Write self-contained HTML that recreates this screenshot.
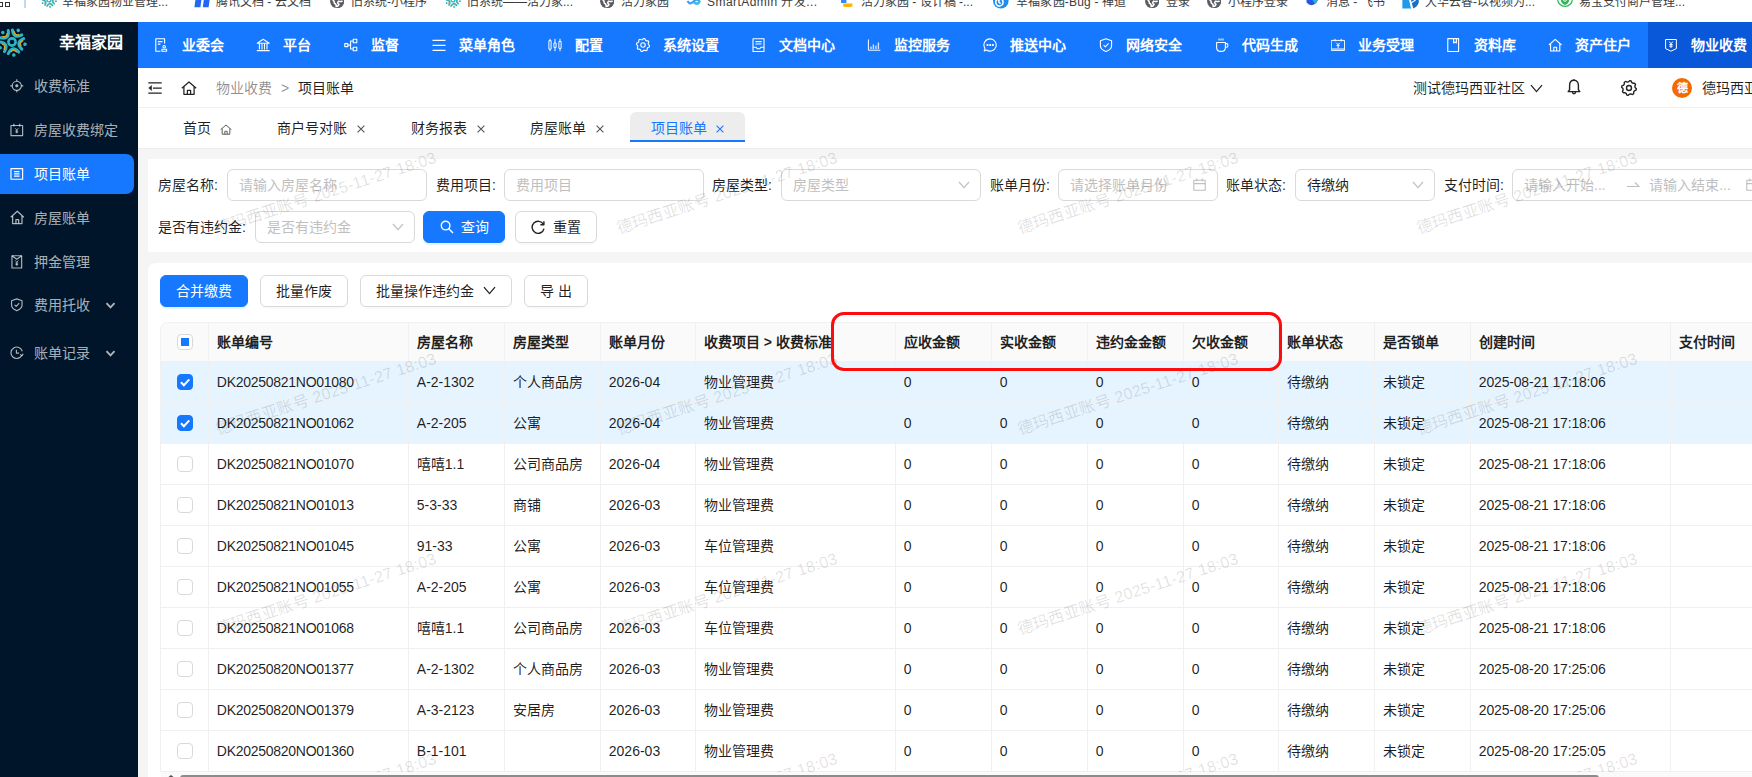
<!DOCTYPE html>
<html lang="zh-CN"><head><meta charset="utf-8"><title>项目账单</title>
<style>
*{box-sizing:border-box;margin:0;padding:0}
html,body{width:1752px;height:777px;overflow:hidden;background:#f5f5f5}
body{font-family:"Liberation Sans",sans-serif;font-size:14px;color:rgba(0,0,0,.88);position:relative;line-height:22px}
.abs{position:absolute}
svg{display:block}
#bm{left:0;top:0;width:1752px;height:22px;background:#fff;overflow:hidden}
#bm span{position:absolute;top:-6px;font-size:12px;line-height:16px;color:#3c3c3c;white-space:nowrap}
#bm i{position:absolute;top:-9px;width:15px;height:15px;border-radius:50%;display:block}
#hdr{left:138px;top:22px;width:1614px;height:46px;background:#1677ff;overflow:hidden}
#hdr .it{position:absolute;top:0;height:46px;color:#fff;font-weight:600;font-size:14px;line-height:46px;white-space:nowrap}
#hdr .ic{position:absolute;top:16px;width:14px;height:14px}
#hdr .act{position:absolute;left:1510px;top:0;width:110px;height:46px;background:#0958d9}
#side{left:0;top:22px;width:138px;height:755px;background:#001529;overflow:hidden}
#side .logo{position:absolute;left:-3px;top:4.8px;width:30px;height:30px}
#side .ttl{position:absolute;left:59px;top:9px;font-size:16px;font-weight:700;color:#fff;line-height:24px;white-space:nowrap}
#side .mi{position:absolute;left:0;width:134px;height:40px;color:rgba(255,255,255,.68);font-weight:500;line-height:40px;white-space:nowrap}
#side .mi.on{background:#1677ff;color:#fff;border-radius:0 8px 8px 0}
#side .mi svg{position:absolute;left:10.2px;top:13.2px;width:13.6px;height:13.6px}
#side .mi b{position:absolute;left:34px;top:0;font-weight:500}
#side .mi .arr{left:105px;top:15px;width:11px;height:11px}
#bc{left:138px;top:68px;width:1614px;height:40px;background:#fff;border-bottom:1px solid #f0f0f0}
#bc .t{position:absolute;top:9px;line-height:22px;white-space:nowrap}
#tabs{left:138px;top:108px;width:1614px;height:41px;background:#fff;border-bottom:1px solid #ececec}
#tabs .t{position:absolute;top:9px;line-height:22px;white-space:nowrap}
#tabs .on{position:absolute;left:492px;top:4px;width:115px;height:30px;background:#ededed;border-radius:6px 6px 0 0;border-bottom:2px solid #1677ff}
#tabs svg.x{position:absolute;top:16.5px;width:8px;height:8px}
#sc{left:148px;top:159px;width:1620px;height:93px;background:#fff;border-radius:0}
.lbl{position:absolute;line-height:32px;white-space:nowrap}
.inp{position:absolute;height:32px;border:1px solid #d9d9d9;border-radius:6px;background:#fff;line-height:30px;padding-left:11px;color:#bfbfbf;white-space:nowrap;overflow:hidden}
.inp.v{color:rgba(0,0,0,.88)}
.inp svg{position:absolute}
.btn{position:absolute;height:32px;border:1px solid #d9d9d9;border-radius:6px;background:#fff;line-height:30px;white-space:nowrap;box-shadow:0 2px 0 rgba(0,0,0,.02)}
.btn.p{background:#1677ff;border-color:#1677ff;color:#fff;box-shadow:0 2px 0 rgba(5,145,255,.1)}
.btn span{position:absolute;top:0}
.btn svg{position:absolute}
#tc{left:148px;top:263px;width:1620px;height:530px;background:#fff;border-radius:8px 0 0 0}
#tb{left:160px;top:322px;width:1600px;height:450px;border-left:1px solid #f0f0f0;border-top:1px solid #f0f0f0;border-radius:8px 0 0 0;overflow:hidden}
#tb .hd{position:absolute;left:0;top:0;width:1600px;height:39px;background:#fafafa;border-bottom:1px solid #f0f0f0}
#tb .r{position:absolute;left:0;width:1600px;height:41px;border-bottom:1px solid #f0f0f0}
#tb .r.s{background:#e6f4ff}
#tb .vl{position:absolute;top:0;width:1px;height:450px;background:#f0f0f0}
#tb .c{position:absolute;top:0;line-height:40px;white-space:nowrap}
#tb .hd .c{font-weight:700;line-height:38px}
.cb{position:absolute;left:16px;width:16px;height:16px;border:1px solid #d9d9d9;border-radius:4px;background:#fff}
.cb.k{background:#1677ff;border-color:#1677ff}
.cb.k svg{position:absolute;left:2px;top:2px;width:10px;height:10px}
.cb.h:after{content:"";position:absolute;left:3px;top:3px;width:8px;height:8px;background:#1677ff}
.wm{position:absolute;color:rgba(0,0,0,.13);font-size:16px;line-height:20px;letter-spacing:.25px;white-space:nowrap;transform:rotate(-18deg);transform-origin:0 50%;pointer-events:none}
#red{left:831px;top:312px;width:451px;height:59px;border:3px solid #fb0d0d;border-radius:13px}
#sb{left:161px;top:772px;width:1600px;height:5px;background:#fafafa}
#sb i{position:absolute;left:19px;top:3px;width:1419px;height:6px;border-radius:3px;background:#8b8b8b}
</style></head><body>
<div id="bm" class="abs"><b style="position:absolute;left:-1px;top:2px;width:4px;height:5px;border:1.5px solid #333"></b><b style="position:absolute;left:5px;top:2px;width:5px;height:5px;border:1.5px solid #333"></b><b style="position:absolute;left:24px;top:0;width:1.5px;height:8px;background:#c9d6f0"></b><svg class="abs" style="left:40.5px;top:-8px;width:16px;height:16px" viewBox="0 0 30 30"><circle cx="15" cy="15" r="3.6" fill="none" stroke="#2fb4c4" stroke-width="2.6"/><g transform="translate(15 15) rotate(-152)" fill="none" stroke-linecap="round"><path d="M-5.3 10.9 Q0 3.0 5.3 10.9" stroke="#2fb4c4" stroke-width="3"/><path d="M-2.2 9.5 Q0 6.9 3 10.2" stroke="#e4a51b" stroke-width="1.4"/><circle cx="0" cy="13.2" r="1.75" fill="#2fb4c4" stroke="none"/></g><g transform="translate(15 15) rotate(-80)" fill="none" stroke-linecap="round"><path d="M-5.3 10.9 Q0 3.0 5.3 10.9" stroke="#2fb4c4" stroke-width="3"/><path d="M-2.2 9.5 Q0 6.9 3 10.2" stroke="#e4a51b" stroke-width="1.4"/><circle cx="0" cy="13.2" r="1.75" fill="#2fb4c4" stroke="none"/></g><g transform="translate(15 15) rotate(-8)" fill="none" stroke-linecap="round"><path d="M-5.3 10.9 Q0 3.0 5.3 10.9" stroke="#2fb4c4" stroke-width="3"/><path d="M-2.2 9.5 Q0 6.9 3 10.2" stroke="#e4a51b" stroke-width="1.4"/><circle cx="0" cy="13.2" r="1.75" fill="#2fb4c4" stroke="none"/></g><g transform="translate(15 15) rotate(64)" fill="none" stroke-linecap="round"><path d="M-5.3 10.9 Q0 3.0 5.3 10.9" stroke="#2fb4c4" stroke-width="3"/><path d="M-2.2 9.5 Q0 6.9 3 10.2" stroke="#e4a51b" stroke-width="1.4"/><circle cx="0" cy="13.2" r="1.75" fill="#2fb4c4" stroke="none"/></g><g transform="translate(15 15) rotate(136)" fill="none" stroke-linecap="round"><path d="M-5.3 10.9 Q0 3.0 5.3 10.9" stroke="#2fb4c4" stroke-width="3"/><path d="M-2.2 9.5 Q0 6.9 3 10.2" stroke="#e4a51b" stroke-width="1.4"/><circle cx="0" cy="13.2" r="1.75" fill="#2fb4c4" stroke="none"/></g></svg><span style="left:62px">幸福家园物业管理...</span><svg class="abs" style="left:194px;top:0px;width:16px;height:8px" viewBox="0 0 16 8"><path d="M1.4 0 H7.4 L6.4 7.2 H.4 Z M9.8 0 H15.6 L14.6 7.2 H8.8 Z" fill="#2468f2"/></svg><span style="left:216px">腾讯文档 - 云文档</span><svg class="abs" style="left:330px;top:-6.4px;width:14.4px;height:14.4px" viewBox="0 0 14.4 14.4"><circle cx="7.2" cy="7.2" r="7.1" fill="#5a5d62"/><path d="M2.2 5.2 Q4.5 6.8 4.4 9.2 Q6.4 9.6 6.2 12.6 Q8.2 12.4 9 10.4 Q6.6 8.6 8.8 7.2 Q10.8 8.2 12.6 6.8" fill="none" stroke="#fff" stroke-width="1.5"/></svg><span style="left:351px">旧系统-小程序</span><svg class="abs" style="left:445px;top:-8px;width:16px;height:16px" viewBox="0 0 30 30"><circle cx="15" cy="15" r="3.6" fill="none" stroke="#2fb4c4" stroke-width="2.6"/><g transform="translate(15 15) rotate(-152)" fill="none" stroke-linecap="round"><path d="M-5.3 10.9 Q0 3.0 5.3 10.9" stroke="#2fb4c4" stroke-width="3"/><path d="M-2.2 9.5 Q0 6.9 3 10.2" stroke="#e4a51b" stroke-width="1.4"/><circle cx="0" cy="13.2" r="1.75" fill="#2fb4c4" stroke="none"/></g><g transform="translate(15 15) rotate(-80)" fill="none" stroke-linecap="round"><path d="M-5.3 10.9 Q0 3.0 5.3 10.9" stroke="#2fb4c4" stroke-width="3"/><path d="M-2.2 9.5 Q0 6.9 3 10.2" stroke="#e4a51b" stroke-width="1.4"/><circle cx="0" cy="13.2" r="1.75" fill="#2fb4c4" stroke="none"/></g><g transform="translate(15 15) rotate(-8)" fill="none" stroke-linecap="round"><path d="M-5.3 10.9 Q0 3.0 5.3 10.9" stroke="#2fb4c4" stroke-width="3"/><path d="M-2.2 9.5 Q0 6.9 3 10.2" stroke="#e4a51b" stroke-width="1.4"/><circle cx="0" cy="13.2" r="1.75" fill="#2fb4c4" stroke="none"/></g><g transform="translate(15 15) rotate(64)" fill="none" stroke-linecap="round"><path d="M-5.3 10.9 Q0 3.0 5.3 10.9" stroke="#2fb4c4" stroke-width="3"/><path d="M-2.2 9.5 Q0 6.9 3 10.2" stroke="#e4a51b" stroke-width="1.4"/><circle cx="0" cy="13.2" r="1.75" fill="#2fb4c4" stroke="none"/></g><g transform="translate(15 15) rotate(136)" fill="none" stroke-linecap="round"><path d="M-5.3 10.9 Q0 3.0 5.3 10.9" stroke="#2fb4c4" stroke-width="3"/><path d="M-2.2 9.5 Q0 6.9 3 10.2" stroke="#e4a51b" stroke-width="1.4"/><circle cx="0" cy="13.2" r="1.75" fill="#2fb4c4" stroke="none"/></g></svg><span style="left:467px">旧系统——活力家...</span><svg class="abs" style="left:600px;top:-6.4px;width:14.4px;height:14.4px" viewBox="0 0 14.4 14.4"><circle cx="7.2" cy="7.2" r="7.1" fill="#5a5d62"/><path d="M2.2 5.2 Q4.5 6.8 4.4 9.2 Q6.4 9.6 6.2 12.6 Q8.2 12.4 9 10.4 Q6.6 8.6 8.8 7.2 Q10.8 8.2 12.6 6.8" fill="none" stroke="#fff" stroke-width="1.5"/></svg><span style="left:621px">活力家园</span><svg class="abs" style="left:686px;top:-3px;width:15px;height:9px" viewBox="0 0 15 9"><path d="M1.5 4 Q4 8.4 7.5 4.6 Q11 .8 13.5 4.6 Q11 8.6 7.6 5" fill="none" stroke="#3aa0ff" stroke-width="2.2"/><path d="M8 5 Q11 8.6 13.5 4.6" fill="none" stroke="#35c3d6" stroke-width="2.2"/></svg><span style="left:707px;letter-spacing:.45px">SmartAdmin 开发...</span><svg class="abs" style="left:841px;top:0px;width:12px;height:8px" viewBox="0 0 12 8"><path d="M0 0 H5.4 V3 H0 Z" fill="#2f8bff"/><path d="M2.2 3.4 H11.4 V6.6 Q6 7.6 2.2 6.6 Z" fill="#ffb400"/></svg><span style="left:861px">活力家园 - 设计稿 -...</span><svg class="abs" style="left:993px;top:-7px;width:15.6px;height:15.6px" viewBox="0 0 15.6 15.6"><circle cx="7.8" cy="7.8" r="7.8" fill="#1e8df0"/><path d="M7.8 10.2 A2 2 0 1 1 9.8 8.2 A3.6 3.6 0 1 1 4.4 6.4" fill="none" stroke="#fff" stroke-width="1.5"/></svg><span style="left:1016px;letter-spacing:.2px">幸福家园-Bug - 禅道</span><svg class="abs" style="left:1145px;top:-6.4px;width:14.4px;height:14.4px" viewBox="0 0 14.4 14.4"><circle cx="7.2" cy="7.2" r="7.1" fill="#5a5d62"/><path d="M2.2 5.2 Q4.5 6.8 4.4 9.2 Q6.4 9.6 6.2 12.6 Q8.2 12.4 9 10.4 Q6.6 8.6 8.8 7.2 Q10.8 8.2 12.6 6.8" fill="none" stroke="#fff" stroke-width="1.5"/></svg><span style="left:1166px">登录</span><svg class="abs" style="left:1207px;top:-6.4px;width:14.4px;height:14.4px" viewBox="0 0 14.4 14.4"><circle cx="7.2" cy="7.2" r="7.1" fill="#5a5d62"/><path d="M2.2 5.2 Q4.5 6.8 4.4 9.2 Q6.4 9.6 6.2 12.6 Q8.2 12.4 9 10.4 Q6.6 8.6 8.8 7.2 Q10.8 8.2 12.6 6.8" fill="none" stroke="#fff" stroke-width="1.5"/></svg><span style="left:1228px">小程序登录</span><svg class="abs" style="left:1306px;top:0px;width:13px;height:6px" viewBox="0 0 13 6"><path d="M.4 0 H11.8 Q11 3 8 4.6 Q3.6 6.4 .6 2.6 Z" fill="#2a55e6"/><path d="M6.5 0 H11.8 Q11 2.4 8.6 3.6 Z" fill="#22b8c8"/></svg><span style="left:1326px">消息 - 飞书</span><svg class="abs" style="left:1402px;top:0px;width:18px;height:9px" viewBox="0 0 18 9"><path d="M.4 0 H7.6 L9.6 8.6 H.4 Z" fill="#1f9be8"/><path d="M9 0 H16.8 Q17.4 5.6 11.2 8.6 Z" fill="#1670c8"/><path d="M7.6 0 L9.6 8.6 M9 3 L13.6 0" stroke="#fff" stroke-width="1.1" fill="none"/></svg><span style="left:1425px">大华云睿-以视频为...</span><svg class="abs" style="left:1557px;top:-8.6px;width:16px;height:16px" viewBox="0 0 16 16"><circle cx="8" cy="8" r="7.4" fill="none" stroke="#2fb457" stroke-width="1.2"/><path d="M3.6 8 Q8 10 12.4 8 Q12 12.6 8 14 Q4 12.6 3.6 8 Z" fill="#2fb457"/><path d="M6.2 9.4 Q8 11.4 9.8 9.4" stroke="#fff" stroke-width="1" fill="none"/></svg><span style="left:1579px">易宝支付商户管理...</span></div>
<div id="side" class="abs"><svg class="logo" viewBox="0 0 30 30"><circle cx="15" cy="15" r="3.6" fill="none" stroke="#2fb4c4" stroke-width="2.6"/><g transform="translate(15 15) rotate(-152)" fill="none" stroke-linecap="round"><path d="M-5.3 10.9 Q0 3.0 5.3 10.9" stroke="#2fb4c4" stroke-width="3"/><path d="M-2.2 9.5 Q0 6.9 3 10.2" stroke="#e4a51b" stroke-width="1.4"/><circle cx="0" cy="13.2" r="1.75" fill="#2fb4c4" stroke="none"/></g><g transform="translate(15 15) rotate(-80)" fill="none" stroke-linecap="round"><path d="M-5.3 10.9 Q0 3.0 5.3 10.9" stroke="#2fb4c4" stroke-width="3"/><path d="M-2.2 9.5 Q0 6.9 3 10.2" stroke="#e4a51b" stroke-width="1.4"/><circle cx="0" cy="13.2" r="1.75" fill="#2fb4c4" stroke="none"/></g><g transform="translate(15 15) rotate(-8)" fill="none" stroke-linecap="round"><path d="M-5.3 10.9 Q0 3.0 5.3 10.9" stroke="#2fb4c4" stroke-width="3"/><path d="M-2.2 9.5 Q0 6.9 3 10.2" stroke="#e4a51b" stroke-width="1.4"/><circle cx="0" cy="13.2" r="1.75" fill="#2fb4c4" stroke="none"/></g><g transform="translate(15 15) rotate(64)" fill="none" stroke-linecap="round"><path d="M-5.3 10.9 Q0 3.0 5.3 10.9" stroke="#2fb4c4" stroke-width="3"/><path d="M-2.2 9.5 Q0 6.9 3 10.2" stroke="#e4a51b" stroke-width="1.4"/><circle cx="0" cy="13.2" r="1.75" fill="#2fb4c4" stroke="none"/></g><g transform="translate(15 15) rotate(136)" fill="none" stroke-linecap="round"><path d="M-5.3 10.9 Q0 3.0 5.3 10.9" stroke="#2fb4c4" stroke-width="3"/><path d="M-2.2 9.5 Q0 6.9 3 10.2" stroke="#e4a51b" stroke-width="1.4"/><circle cx="0" cy="13.2" r="1.75" fill="#2fb4c4" stroke="none"/></g></svg><div class="ttl">幸福家园</div><div class="mi" style="top:44px"><svg viewBox="0 0 14 14"><g fill="none" stroke="currentColor" stroke-width="1.2" stroke-linejoin="round"><circle cx="7" cy="7" r="4.7"/><circle cx="7" cy="7" r="1.3" fill="currentColor" stroke-width=".6"/><path d="M7 .3 V2.3 M7 11.7 V13.7 M.3 7 H2.3 M11.7 7 H13.7"/></g></svg><b>收费标准</b></div><div class="mi" style="top:88px"><svg viewBox="0 0 14 14"><g fill="none" stroke="currentColor" stroke-width="1.2" stroke-linejoin="round"><rect x="1" y="2.6" width="12" height="10.4"/><path d="M4 .8 V3.6 M10 .8 V3.6"/><path d="M5.4 5.4 L7 7.3 L8.6 5.4 M7 7.3 V10.6 M5.6 8.2 H8.4 M5.6 9.4 H8.4" stroke-width=".9"/></g></svg><b>房屋收费绑定</b></div><div class="mi on" style="top:132px"><svg viewBox="0 0 14 14"><g fill="none" stroke="currentColor" stroke-width="1.2" stroke-linejoin="round"><rect x="1" y="1.6" width="12" height="11"/><path d="M4.2 4.8 H9.8 M4.2 7.1 H9.8 M4.2 9.4 H9.8"/></g></svg><b>项目账单</b></div><div class="mi" style="top:176px"><svg viewBox="0 0 14 14" style="left:9.6px;top:12.4px;width:14.6px;height:14.6px"><g fill="none" stroke="currentColor" stroke-width="1.2" stroke-linejoin="round"><path d="M.7 7 L7 1.2 L13.3 7"/><path d="M2.5 5.8 V13 H11.5 V5.8"/><path d="M5.7 13 V9.3 H8.3 V13"/></g></svg><b>房屋账单</b></div><div class="mi" style="top:220px"><svg viewBox="0 0 14 14"><g fill="none" stroke="currentColor" stroke-width="1.2" stroke-linejoin="round"><rect x="2" y=".8" width="10" height="12.6"/><path d="M2 .8 L7 4.4 L12 .8" /><path d="M5.4 5.6 L7 7.5 L8.6 5.6 M7 7.5 V11.2 M5.6 8.4 H8.4 M5.6 9.8 H8.4" stroke-width=".9"/></g></svg><b>押金管理</b></div><div class="mi" style="top:263px"><svg viewBox="0 0 14 14"><g fill="none" stroke="currentColor" stroke-width="1.2" stroke-linejoin="round"><path d="M7 .9 L12.4 2.9 V7.3 C12.4 10.2 9.7 12.1 7 13.2 C4.3 12.1 1.6 10.2 1.6 7.3 V2.9 Z"/><path d="M4.7 7 L6.4 8.7 L9.5 5.3"/></g></svg><b>费用托收</b><svg class="arr" viewBox="0 0 11 11" style="left:105px;top:15px;width:11px;height:11px"><path d="M1.5 3.2 L5.5 7.4 L9.5 3.2" fill="none" stroke="currentColor" stroke-width="1.9"/></svg></div><div class="mi" style="top:311px"><svg viewBox="0 0 14 14"><g fill="none" stroke="currentColor" stroke-width="1.2" stroke-linejoin="round"><path d="M12.2 9.6 A5.9 5.9 0 1 1 12.6 5.4"/><path d="M10.6 8.6 L12.4 10 L13.6 8"/><path d="M6.6 3.8 V7.4 H9.4"/></g></svg><b>账单记录</b><svg class="arr" viewBox="0 0 11 11" style="left:105px;top:15px;width:11px;height:11px"><path d="M1.5 3.2 L5.5 7.4 L9.5 3.2" fill="none" stroke="currentColor" stroke-width="1.9"/></svg></div></div>
<div id="hdr" class="abs"><div class="act"></div><svg class="ic" style="left:16.7px" viewBox="0 0 14 14"><g fill="none" stroke="#fff" stroke-width="1.1" stroke-linejoin="round"><path d="M5.4 13.3 H.8 V.7 H9.6 V5.6"/><path d="M2.8 3.6 H7.6 M2.8 6.1 H5.4"/><circle cx="9.2" cy="8.7" r="1.25"/><path d="M6.9 13.3 V11.2 H11.6 V13.3 Z"/></g></svg><div class="it" style="left:43.6px">业委会</div><svg class="ic" style="left:118.2px" viewBox="0 0 14 14"><g fill="none" stroke="#fff" stroke-width="1.1" stroke-linejoin="round"><path d="M1.2 5.2 L7.2 1.3 L13.2 5.2 Z"/><path d="M3.4 5.6 V11.4 M6 5.6 V11.4 M8.5 5.6 V11.4 M11 5.6 V11.4 M.8 12.6 H13.6"/></g></svg><div class="it" style="left:145.1px">平台</div><svg class="ic" style="left:206.2px" viewBox="0 0 14 14"><g fill="none" stroke="#fff" stroke-width="1.1" stroke-linejoin="round"><rect x=".8" y="5.6" width="3" height="3"/><rect x="9.2" y="1.3" width="3.6" height="3.4"/><rect x="9.2" y="9.3" width="3.6" height="3.4"/><path d="M3.8 7.1 H6.6 M9.2 3 H6.6 V11 H9.2"/></g></svg><div class="it" style="left:233.1px">监督</div><svg class="ic" style="left:293.9px" viewBox="0 0 14 14"><g fill="none" stroke="#fff" stroke-width="1.3" stroke-linejoin="round"><path d="M.5 2.4 H13.5 M.5 7.3 H13.5 M.5 12.4 H13.5"/></g></svg><div class="it" style="left:320.8px">菜单角色</div><svg class="ic" style="left:409.9px" viewBox="0 0 14 14"><g fill="none" stroke="#fff" stroke-width="1" stroke-linejoin="round"><path d="M2 .8 V13.2 M7 .8 V13.2 M12 .8 V13.2"/><rect x=".9" y="2.6" width="2.2" height="8.6" fill="#1677ff"/><rect x="5.9" y="5" width="2.2" height="4.4" fill="#1677ff"/><rect x="10.9" y="3.4" width="2.2" height="7" fill="#1677ff"/></g></svg><div class="it" style="left:436.8px">配置</div><svg class="ic" style="left:497.9px" viewBox="0 0 14 14"><g fill="none" stroke="#fff" stroke-width="1.1" stroke-linejoin="round"><path d="M7.65 0.43 L8.92 0.68 L9.55 2.24 L10.43 2.83 L12.10 2.81 L12.82 3.89 L12.17 5.43 L12.37 6.47 L13.57 7.65 L13.32 8.92 L11.76 9.55 L11.17 10.43 L11.19 12.10 L10.11 12.82 L8.57 12.17 L7.53 12.37 L6.35 13.57 L5.08 13.32 L4.45 11.76 L3.57 11.17 L1.90 11.19 L1.18 10.11 L1.83 8.57 L1.63 7.53 L0.43 6.35 L0.68 5.08 L2.24 4.45 L2.83 3.57 L2.81 1.90 L3.89 1.18 L5.43 1.83 L6.47 1.63 Z"/><circle cx="7" cy="7" r="2.2"/></g></svg><div class="it" style="left:524.8px">系统设置</div><svg class="ic" style="left:613.9px" viewBox="0 0 14 14"><g fill="none" stroke="#fff" stroke-width="1.1" stroke-linejoin="round"><rect x="1" y=".7" width="11" height="12.8"/><path d="M3.4 3.6 H9.6 M3.4 6 H9.6 M1 9.2 H4.2 L5.2 10.8 H7.8 L8.8 9.2 H12"/></g></svg><div class="it" style="left:640.8px">文档中心</div><svg class="ic" style="left:729.2px" viewBox="0 0 14 14"><g fill="none" stroke="#fff" stroke-width="1" stroke-linejoin="round"><path d="M1.4 1.5 V12.2 H13.4"/><path d="M4 8.4 V11 M6.4 6.6 V11 M8.9 7.6 V11 M11.4 4.4 V11" stroke-width="1.4" opacity=".8"/></g></svg><div class="it" style="left:756.1px">监控服务</div><svg class="ic" style="left:845.2px" viewBox="0 0 14 14"><g fill="none" stroke="#fff" stroke-width="1.1" stroke-linejoin="round"><path d="M7.2 .9 A6.1 6.1 0 1 1 3.6 12 L1.2 12.9 L2 10.4 A6.1 6.1 0 0 1 7.2 .9 Z"/><circle cx="4.5" cy="7" r=".55" fill="#fff"/><circle cx="7.2" cy="7" r=".55" fill="#fff"/><circle cx="9.9" cy="7" r=".55" fill="#fff"/></g></svg><div class="it" style="left:872.1px">推送中心</div><svg class="ic" style="left:961.2px" viewBox="0 0 14 14"><g fill="none" stroke="#fff" stroke-width="1.1" stroke-linejoin="round"><path d="M7 .7 L12.6 2.7 V7.4 C12.6 10.4 9.8 12.4 7 13.5 C4.2 12.4 1.4 10.4 1.4 7.4 V2.7 Z"/><path d="M4.6 7.2 L6.3 8.9 L9.6 5.3"/></g></svg><div class="it" style="left:988.1px">网络安全</div><svg class="ic" style="left:1077.2px" viewBox="0 0 14 14"><g fill="none" stroke="#fff" stroke-width="1.1" stroke-linejoin="round"><path d="M4 .4 V2.6 M6 .4 V2.6 M8 .4 V2.6"/><path d="M1.6 4.5 H10.4 V9.4 C10.4 11.9 8.4 13.4 6 13.4 C3.6 13.4 1.6 11.9 1.6 9.4 Z"/><path d="M10.4 5.6 H11.6 C13.4 5.6 13.4 9.2 11.6 9.2 H10.4"/></g></svg><div class="it" style="left:1104.1px">代码生成</div><svg class="ic" style="left:1192.9px" viewBox="0 0 14 14"><g fill="none" stroke="#fff" stroke-width="1" stroke-linejoin="round"><rect x=".2" y="2.4" width="13.4" height="10"/><path d="M4 .8 V3.4 M10.2 .8 V3.4 M.7 11 H13.5"/><path d="M5.4 4.8 L7.1 6.8 L8.8 4.8 M7.1 6.8 V10 M5.6 7.4 H8.6"/></g></svg><div class="it" style="left:1219.8px">业务受理</div><svg class="ic" style="left:1308.9px" viewBox="0 0 14 14"><g fill="none" stroke="#fff" stroke-width="1.1" stroke-linejoin="round"><rect x=".8" y=".6" width="10.8" height="13"/><path d="M6.6 .6 V5 L8 4 L9.4 5 V.6"/></g></svg><div class="it" style="left:1335.8px">资料库</div><svg class="ic" style="left:1410.4px" viewBox="0 0 14 14"><g fill="none" stroke="#fff" stroke-width="1.1" stroke-linejoin="round"><path d="M.9 7 L7.2 1.3 L13.5 7"/><path d="M2.6 5.8 V13 H11.8 V5.8"/><path d="M5.8 13 V9.2 H8.6 V13"/></g></svg><div class="it" style="left:1437.3px">资产住户</div><svg class="ic" style="left:1526.2px" viewBox="0 0 14 14"><g fill="none" stroke="#fff" stroke-width="1" stroke-linejoin="round"><path d="M1.6 1.5 H12.4 V10.6 L7 13.2 L1.6 10.6 Z"/><path d="M5.2 3.6 L7 5.8 L8.8 3.6 M7 5.8 V10 M5.3 6.6 H8.7 M5.3 8.2 H8.7"/></g></svg><div class="it" style="left:1553.1px">物业收费</div></div>
<div id="bc" class="abs"><svg class="abs" style="left:10px;top:14px;width:14px;height:12px" viewBox="0 0 14 12"><g fill="none" stroke="#222" stroke-width="1.25" stroke-linejoin="round"><path d="M.3 .8 H13.7 M5 6 H13.7 M.3 11.2 H13.7"/><path d="M3.6 3.4 V8.6 L.6 6 Z" fill="#222" stroke-width=".4"/></g></svg><svg class="abs" style="left:43px;top:13px;width:16px;height:14px" viewBox="0 0 16 14"><g fill="none" stroke="#222" stroke-width="1.25" stroke-linejoin="round"><path d="M.8 7.2 L8 1 L15.2 7.2"/><path d="M2.9 5.8 V13.3 H13.1 V5.8"/><path d="M6.4 13.3 V9.4 H9.6 V13.3"/></g></svg><div class="t" style="left:78px;color:rgba(0,0,0,.45)">物业收费</div><div class="t" style="left:143px;color:rgba(0,0,0,.45)">&gt;</div><div class="t" style="left:160px">项目账单</div><div class="t" style="left:1275px">测试德玛西亚社区</div><svg class="abs" style="left:1392px;top:16px;width:13px;height:9px" viewBox="0 0 13 9"><path d="M1 1.2 L6.5 7.6 L12 1.2" fill="none" stroke="#222" stroke-width="1.3"/></svg><svg class="abs" style="left:1429px;top:11px;width:14px;height:17px" viewBox="0 0 14 17"><g fill="none" stroke="#222" stroke-width="1.4" stroke-linejoin="round"><path d="M7 1.2 C3.8 1.2 2.6 3.8 2.6 6.2 V10.8 L1.2 12.6 H12.8 L11.4 10.8 V6.2 C11.4 3.8 10.2 1.2 7 1.2 Z"/><path d="M5.4 13 C5.6 15.4 8.4 15.4 8.6 13" /><path d="M7 .2 V1.2"/></g></svg><svg class="abs" style="left:1483px;top:12px;width:16px;height:16px" viewBox="0 0 16 16"><g fill="none" stroke="#222" stroke-width="1.4" stroke-linejoin="round"><path d="M8.73 0.64 L10.15 0.92 L10.88 2.62 L11.87 3.28 L13.72 3.31 L14.53 4.51 L13.84 6.23 L14.07 7.40 L15.36 8.73 L15.08 10.15 L13.38 10.88 L12.72 11.87 L12.69 13.72 L11.49 14.53 L9.77 13.84 L8.60 14.07 L7.27 15.36 L5.85 15.08 L5.12 13.38 L4.13 12.72 L2.28 12.69 L1.47 11.49 L2.16 9.77 L1.93 8.60 L0.64 7.27 L0.92 5.85 L2.62 5.12 L3.28 4.13 L3.31 2.28 L4.51 1.47 L6.23 2.16 L7.40 1.93 Z"/><circle cx="8" cy="8" r="2.5"/></g></svg><div class="abs" style="left:1534px;top:10px;width:20px;height:20px;border-radius:50%;background:#f56a00;color:#fff;font-size:11px;font-weight:600;line-height:20px;text-align:center">德</div><div class="t" style="left:1564px">德玛西亚</div></div>
<div id="tabs" class="abs"><div class="on"></div><div class="t" style="left:45px">首页</div><svg class="abs" style="left:82px;top:16px;width:12px;height:11px" viewBox="0 0 16 14"><g fill="none" stroke="#555" stroke-width="1.25" stroke-linejoin="round"><path d="M.8 7.2 L8 1 L15.2 7.2"/><path d="M2.9 5.8 V13.3 H13.1 V5.8"/><path d="M6.4 13.3 V9.4 H9.6 V13.3"/></g></svg><div class="t" style="left:139px;color:rgba(0,0,0,.88)">商户号对账</div><svg class="x" style="left:219px" viewBox="0 0 8 8"><path d="M.6 .6 L7.4 7.4 M7.4 .6 L.6 7.4" stroke="#555" stroke-width="1.1" fill="none"/></svg><div class="t" style="left:273px;color:rgba(0,0,0,.88)">财务报表</div><svg class="x" style="left:339px" viewBox="0 0 8 8"><path d="M.6 .6 L7.4 7.4 M7.4 .6 L.6 7.4" stroke="#555" stroke-width="1.1" fill="none"/></svg><div class="t" style="left:392px;color:rgba(0,0,0,.88)">房屋账单</div><svg class="x" style="left:458px" viewBox="0 0 8 8"><path d="M.6 .6 L7.4 7.4 M7.4 .6 L.6 7.4" stroke="#555" stroke-width="1.1" fill="none"/></svg><div class="t" style="left:513px;color:#1677ff">项目账单</div><svg class="x" style="left:578px" viewBox="0 0 8 8"><path d="M.6 .6 L7.4 7.4 M7.4 .6 L.6 7.4" stroke="#1677ff" stroke-width="1.1" fill="none"/></svg></div>
<div id="sc" class="abs"><div class="lbl" style="left:10px;top:10px">房屋名称:</div><div class="inp" style="left:79px;top:10px;width:200px">请输入房屋名称</div><div class="lbl" style="left:288px;top:10px">费用项目:</div><div class="inp" style="left:356px;top:10px;width:200px">费用项目</div><div class="lbl" style="left:564px;top:10px">房屋类型:</div><div class="inp" style="left:633px;top:10px;width:200px">房屋类型<svg style="right:10px;top:11px;width:12px;height:8px" viewBox="0 0 12 8"><path d="M1 1 L6 6.6 L11 1" fill="none" stroke="#bfbfbf" stroke-width="1.2"/></svg></div><div class="lbl" style="left:842px;top:10px">账单月份:</div><div class="inp" style="left:910px;top:10px;width:160px">请选择账单月份<svg style="right:11px;top:8px;width:13px;height:13px" viewBox="0 0 13 13"><g fill="none" stroke="#bfbfbf" stroke-width="1.1" stroke-linejoin="round"><rect x=".8" y="2.2" width="11.4" height="10"/><path d="M3.8 .6 V3.4 M9.2 .6 V3.4 M.8 5.6 H12.2"/></g></svg></div><div class="lbl" style="left:1078px;top:10px">账单状态:</div><div class="inp v" style="left:1147px;top:10px;width:140px">待缴纳<svg style="right:10px;top:11px;width:12px;height:8px" viewBox="0 0 12 8"><path d="M1 1 L6 6.6 L11 1" fill="none" stroke="#bfbfbf" stroke-width="1.2"/></svg></div><div class="lbl" style="left:1296px;top:10px">支付时间:</div><div class="inp" style="left:1364px;top:10px;width:260px">请输入开始...<span style="position:absolute;left:136.2px;top:0">请输入结束...</span><svg style="left:114px;top:11px;width:13px;height:8px" viewBox="0 0 13 8"><path d="M0 5.5 H12 L8 1.5" fill="none" stroke="#bfbfbf" stroke-width="1.1"/></svg><svg style="left:233px;top:8px;width:13px;height:13px" viewBox="0 0 13 13"><g fill="none" stroke="#bfbfbf" stroke-width="1.1" stroke-linejoin="round"><rect x=".8" y="2.2" width="11.4" height="10"/><path d="M3.8 .6 V3.4 M9.2 .6 V3.4 M.8 5.6 H12.2"/></g></svg></div><div class="lbl" style="left:10px;top:52px">是否有违约金:</div><div class="inp" style="left:107px;top:52px;width:160px">是否有违约金<svg style="right:10px;top:11px;width:12px;height:8px" viewBox="0 0 12 8"><path d="M1 1 L6 6.6 L11 1" fill="none" stroke="#bfbfbf" stroke-width="1.2"/></svg></div><div class="btn p" style="left:275px;top:52px;width:82px"><svg style="left:16px;top:8px;width:14px;height:14px" viewBox="0 0 14 14"><g fill="none" stroke="#fff" stroke-width="1.4" stroke-linejoin="round"><circle cx="5.6" cy="5.6" r="4.3"/><path d="M8.8 8.8 L13 13"/></g></svg><span style="left:37px">查询</span></div><div class="btn" style="left:367px;top:52px;width:82px"><svg style="left:15px;top:8px;width:14px;height:14px" viewBox="0 0 14 14"><g fill="none" stroke="#222" stroke-width="1.4" stroke-linejoin="round"><path d="M12.4 4.4 A6 6 0 1 0 13 8.6"/><path d="M12.9 1.2 V4.8 H9.4" /></g></svg><span style="left:37.2px">重置</span></div></div>
<div id="tc" class="abs"><div class="btn p" style="left:12px;top:12px;width:88px"><span style="left:15px">合并缴费</span></div><div class="btn" style="left:112px;top:12px;width:88px"><span style="left:15px">批量作废</span></div><div class="btn" style="left:212px;top:12px;width:152px"><span style="left:15px">批量操作违约金</span><svg style="left:122px;top:10.3px;width:13px;height:9px" viewBox="0 0 13 9"><path d="M1 1.2 L6.5 7.6 L12 1.2" fill="none" stroke="#222" stroke-width="1.3"/></svg></div><div class="btn" style="left:376px;top:12px;width:64px"><span style="left:15px">导 出</span></div></div>
<div id="tb" class="abs"><div class="hd"><div class="cb h" style="top:11px"></div><div class="c" style="left:55.8px">账单编号</div><div class="c" style="left:255.8px">房屋名称</div><div class="c" style="left:351.8px">房屋类型</div><div class="c" style="left:447.8px">账单月份</div><div class="c" style="left:542.8px">收费项目 &gt; 收费标准</div><div class="c" style="left:742.8px">应收金额</div><div class="c" style="left:838.8px">实收金额</div><div class="c" style="left:934.8px">违约金金额</div><div class="c" style="left:1030.8px">欠收金额</div><div class="c" style="left:1125.8px">账单状态</div><div class="c" style="left:1221.8px">是否锁单</div><div class="c" style="left:1317.8px">创建时间</div><div class="c" style="left:1517.8px">支付时间</div></div><div class="r s" style="top:39px"><div class="cb k" style="top:12px"><svg viewBox="0 0 10 10"><path d="M.9 5.3 L3.9 8.3 L9.3 2.4" fill="none" stroke="#fff" stroke-width="2"/></svg></div><div class="c" style="left:55.8px;letter-spacing:-.27px">DK20250821NO01080</div><div class="c" style="left:255.8px">A-2-1302</div><div class="c" style="left:351.8px">个人商品房</div><div class="c" style="left:447.8px">2026-04</div><div class="c" style="left:542.8px">物业管理费</div><div class="c" style="left:742.8px">0</div><div class="c" style="left:838.8px">0</div><div class="c" style="left:934.8px">0</div><div class="c" style="left:1030.8px">0</div><div class="c" style="left:1125.8px">待缴纳</div><div class="c" style="left:1221.8px">未锁定</div><div class="c" style="left:1317.8px;letter-spacing:-.17px">2025-08-21 17:18:06</div></div><div class="r s" style="top:80px"><div class="cb k" style="top:12px"><svg viewBox="0 0 10 10"><path d="M.9 5.3 L3.9 8.3 L9.3 2.4" fill="none" stroke="#fff" stroke-width="2"/></svg></div><div class="c" style="left:55.8px;letter-spacing:-.27px">DK20250821NO01062</div><div class="c" style="left:255.8px">A-2-205</div><div class="c" style="left:351.8px">公寓</div><div class="c" style="left:447.8px">2026-04</div><div class="c" style="left:542.8px">物业管理费</div><div class="c" style="left:742.8px">0</div><div class="c" style="left:838.8px">0</div><div class="c" style="left:934.8px">0</div><div class="c" style="left:1030.8px">0</div><div class="c" style="left:1125.8px">待缴纳</div><div class="c" style="left:1221.8px">未锁定</div><div class="c" style="left:1317.8px;letter-spacing:-.17px">2025-08-21 17:18:06</div></div><div class="r" style="top:121px"><div class="cb" style="top:12px"></div><div class="c" style="left:55.8px;letter-spacing:-.27px">DK20250821NO01070</div><div class="c" style="left:255.8px">嘻嘻1.1</div><div class="c" style="left:351.8px">公司商品房</div><div class="c" style="left:447.8px">2026-04</div><div class="c" style="left:542.8px">物业管理费</div><div class="c" style="left:742.8px">0</div><div class="c" style="left:838.8px">0</div><div class="c" style="left:934.8px">0</div><div class="c" style="left:1030.8px">0</div><div class="c" style="left:1125.8px">待缴纳</div><div class="c" style="left:1221.8px">未锁定</div><div class="c" style="left:1317.8px;letter-spacing:-.17px">2025-08-21 17:18:06</div></div><div class="r" style="top:162px"><div class="cb" style="top:12px"></div><div class="c" style="left:55.8px;letter-spacing:-.27px">DK20250821NO01013</div><div class="c" style="left:255.8px">5-3-33</div><div class="c" style="left:351.8px">商铺</div><div class="c" style="left:447.8px">2026-03</div><div class="c" style="left:542.8px">物业管理费</div><div class="c" style="left:742.8px">0</div><div class="c" style="left:838.8px">0</div><div class="c" style="left:934.8px">0</div><div class="c" style="left:1030.8px">0</div><div class="c" style="left:1125.8px">待缴纳</div><div class="c" style="left:1221.8px">未锁定</div><div class="c" style="left:1317.8px;letter-spacing:-.17px">2025-08-21 17:18:06</div></div><div class="r" style="top:203px"><div class="cb" style="top:12px"></div><div class="c" style="left:55.8px;letter-spacing:-.27px">DK20250821NO01045</div><div class="c" style="left:255.8px">91-33</div><div class="c" style="left:351.8px">公寓</div><div class="c" style="left:447.8px">2026-03</div><div class="c" style="left:542.8px">车位管理费</div><div class="c" style="left:742.8px">0</div><div class="c" style="left:838.8px">0</div><div class="c" style="left:934.8px">0</div><div class="c" style="left:1030.8px">0</div><div class="c" style="left:1125.8px">待缴纳</div><div class="c" style="left:1221.8px">未锁定</div><div class="c" style="left:1317.8px;letter-spacing:-.17px">2025-08-21 17:18:06</div></div><div class="r" style="top:244px"><div class="cb" style="top:12px"></div><div class="c" style="left:55.8px;letter-spacing:-.27px">DK20250821NO01055</div><div class="c" style="left:255.8px">A-2-205</div><div class="c" style="left:351.8px">公寓</div><div class="c" style="left:447.8px">2026-03</div><div class="c" style="left:542.8px">车位管理费</div><div class="c" style="left:742.8px">0</div><div class="c" style="left:838.8px">0</div><div class="c" style="left:934.8px">0</div><div class="c" style="left:1030.8px">0</div><div class="c" style="left:1125.8px">待缴纳</div><div class="c" style="left:1221.8px">未锁定</div><div class="c" style="left:1317.8px;letter-spacing:-.17px">2025-08-21 17:18:06</div></div><div class="r" style="top:285px"><div class="cb" style="top:12px"></div><div class="c" style="left:55.8px;letter-spacing:-.27px">DK20250821NO01068</div><div class="c" style="left:255.8px">嘻嘻1.1</div><div class="c" style="left:351.8px">公司商品房</div><div class="c" style="left:447.8px">2026-03</div><div class="c" style="left:542.8px">车位管理费</div><div class="c" style="left:742.8px">0</div><div class="c" style="left:838.8px">0</div><div class="c" style="left:934.8px">0</div><div class="c" style="left:1030.8px">0</div><div class="c" style="left:1125.8px">待缴纳</div><div class="c" style="left:1221.8px">未锁定</div><div class="c" style="left:1317.8px;letter-spacing:-.17px">2025-08-21 17:18:06</div></div><div class="r" style="top:326px"><div class="cb" style="top:12px"></div><div class="c" style="left:55.8px;letter-spacing:-.27px">DK20250820NO01377</div><div class="c" style="left:255.8px">A-2-1302</div><div class="c" style="left:351.8px">个人商品房</div><div class="c" style="left:447.8px">2026-03</div><div class="c" style="left:542.8px">物业管理费</div><div class="c" style="left:742.8px">0</div><div class="c" style="left:838.8px">0</div><div class="c" style="left:934.8px">0</div><div class="c" style="left:1030.8px">0</div><div class="c" style="left:1125.8px">待缴纳</div><div class="c" style="left:1221.8px">未锁定</div><div class="c" style="left:1317.8px;letter-spacing:-.17px">2025-08-20 17:25:06</div></div><div class="r" style="top:367px"><div class="cb" style="top:12px"></div><div class="c" style="left:55.8px;letter-spacing:-.27px">DK20250820NO01379</div><div class="c" style="left:255.8px">A-3-2123</div><div class="c" style="left:351.8px">安居房</div><div class="c" style="left:447.8px">2026-03</div><div class="c" style="left:542.8px">物业管理费</div><div class="c" style="left:742.8px">0</div><div class="c" style="left:838.8px">0</div><div class="c" style="left:934.8px">0</div><div class="c" style="left:1030.8px">0</div><div class="c" style="left:1125.8px">待缴纳</div><div class="c" style="left:1221.8px">未锁定</div><div class="c" style="left:1317.8px;letter-spacing:-.17px">2025-08-20 17:25:06</div></div><div class="r" style="top:408px"><div class="cb" style="top:12px"></div><div class="c" style="left:55.8px;letter-spacing:-.27px">DK20250820NO01360</div><div class="c" style="left:255.8px">B-1-101</div><div class="c" style="left:447.8px">2026-03</div><div class="c" style="left:542.8px">物业管理费</div><div class="c" style="left:742.8px">0</div><div class="c" style="left:838.8px">0</div><div class="c" style="left:934.8px">0</div><div class="c" style="left:1030.8px">0</div><div class="c" style="left:1125.8px">待缴纳</div><div class="c" style="left:1221.8px">未锁定</div><div class="c" style="left:1317.8px;letter-spacing:-.17px">2025-08-20 17:25:05</div></div><div class="vl" style="left:47px"></div><div class="vl" style="left:247px"></div><div class="vl" style="left:343px"></div><div class="vl" style="left:439px"></div><div class="vl" style="left:534px"></div><div class="vl" style="left:734px"></div><div class="vl" style="left:830px"></div><div class="vl" style="left:926px"></div><div class="vl" style="left:1022px"></div><div class="vl" style="left:1117px"></div><div class="vl" style="left:1213px"></div><div class="vl" style="left:1309px"></div><div class="vl" style="left:1509px"></div></div>
<div class="wm" style="left:215.6px;top:219.3px">德玛西亚账号 2025-11-27 18:03</div><div class="wm" style="left:616.6px;top:219.3px">德玛西亚账号 2025-11-27 18:03</div><div class="wm" style="left:1017.6px;top:219.3px">德玛西亚账号 2025-11-27 18:03</div><div class="wm" style="left:1417.4px;top:219.3px">德玛西亚账号 2025-11-27 18:03</div><div class="wm" style="left:215.6px;top:419.5px">德玛西亚账号 2025-11-27 18:03</div><div class="wm" style="left:616.6px;top:419.5px">德玛西亚账号 2025-11-27 18:03</div><div class="wm" style="left:1017.6px;top:419.5px">德玛西亚账号 2025-11-27 18:03</div><div class="wm" style="left:1417.4px;top:419.5px">德玛西亚账号 2025-11-27 18:03</div><div class="wm" style="left:215.6px;top:619.8px">德玛西亚账号 2025-11-27 18:03</div><div class="wm" style="left:616.6px;top:619.8px">德玛西亚账号 2025-11-27 18:03</div><div class="wm" style="left:1017.6px;top:619.8px">德玛西亚账号 2025-11-27 18:03</div><div class="wm" style="left:1417.4px;top:619.8px">德玛西亚账号 2025-11-27 18:03</div><div class="wm" style="left:215.6px;top:820.2px">德玛西亚账号 2025-11-27 18:03</div><div class="wm" style="left:616.6px;top:820.2px">德玛西亚账号 2025-11-27 18:03</div><div class="wm" style="left:1017.6px;top:820.2px">德玛西亚账号 2025-11-27 18:03</div><div class="wm" style="left:1417.4px;top:820.2px">德玛西亚账号 2025-11-27 18:03</div><div id="red" class="abs"></div>
<div id="sb" class="abs"><b style="position:absolute;left:5px;top:3.2px;width:0;height:0;border-bottom:4px solid #505050;border-left:5px solid transparent;border-right:5px solid transparent"></b><i></i></div>
</body></html>
